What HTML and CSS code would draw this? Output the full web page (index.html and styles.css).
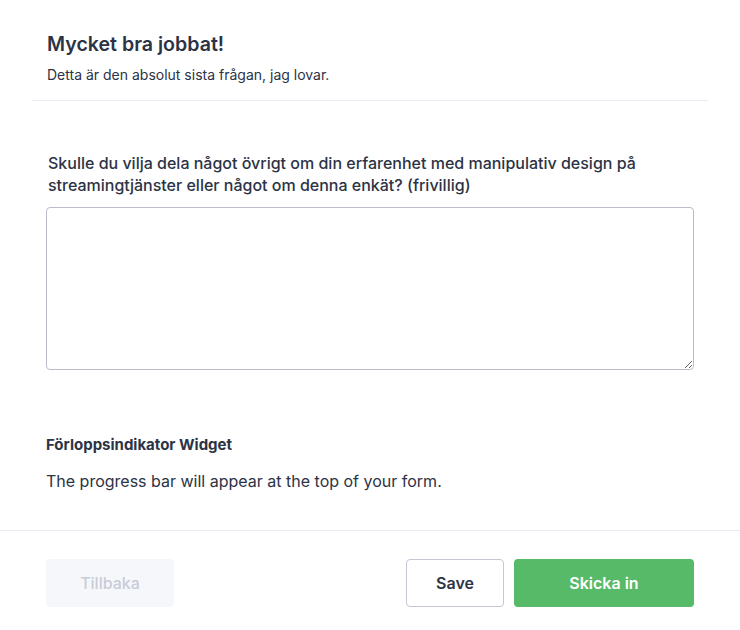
FILE: index.html
```html
<!DOCTYPE html>
<html lang="sv">
<head>
<meta charset="utf-8">
<link rel="stylesheet" href="styles.css">
</head>
<body>
<div class="page">
  <header class="header">
    <h1 class="title">Mycket bra jobbat!</h1>
    <p class="subtitle">Detta är den absolut sista frågan, jag lovar.</p>
  </header>
  <section class="question">
    <label class="q-label">Skulle du vilja dela något övrigt om din erfarenhet med manipulativ design på streamingtjänster eller något om denna enkät? (frivillig)</label>
    <textarea class="q-input"></textarea>
  </section>
  <section class="widget">
    <h2 class="widget-title">Förloppsindikator Widget</h2>
    <p class="widget-text">The progress bar will appear at the top of your form.</p>
  </section>
  <footer class="footer">
    <button class="btn btn-back">Tillbaka</button>
    <div class="right">
      <button class="btn btn-save">Save</button>
      <button class="btn btn-submit">Skicka in</button>
    </div>
  </footer>
</div>
</body>
</html>
```

FILE: styles.css
```css
* { box-sizing: border-box; }
html, body { margin: 0; padding: 0; background: #fff; }
body {
  font-family: Inter, "Noto Sans", sans-serif;
  color: #2c3345;
  width: 740px;
}
.page { display: flex; flex-direction: column; }
.header {
  margin: 0 32px;
  padding: 32px 15px 15px;
  border-bottom: 1px solid #eaebf2;
}
.title {
  margin: 0;
  font-size: 19.6px;
  line-height: 24px;
  font-weight: 600;
}
.subtitle {
  margin: 9px 0 0;
  font-size: 14px;
  line-height: 20px;
}
.question {
  padding: 51px 46px 0 46px;
  display: flex;
  flex-direction: column;
}
.q-label {
  font-size: 16px;
  line-height: 22px;
  font-weight: 500;
  padding: 0 0 0 2px;
  margin-bottom: 11px;
}
.q-input {
  width: 648px;
  height: 163px;
  border: 1px solid #b8bdc9;
  border-radius: 4px;
  resize: vertical;
  font-family: inherit;
}
.widget {
  padding: 65px 46px 38px;
}
.widget-title {
  margin: 0;
  font-size: 15px;
  line-height: 20px;
  font-weight: 700;
}
.widget-text {
  margin: 15px 0 0;
  font-size: 16px;
  line-height: 22px;
  font-weight: 400;
}
.footer {
  border-top: 1px solid #eaebf2;
  padding: 28px 46px 0;
  display: flex;
  justify-content: space-between;
}
.right { display: flex; gap: 10px; }
.btn {
  height: 48px;
  font-family: inherit;
  font-size: 16px;
  font-weight: 600;
  border-radius: 4px;
  cursor: pointer;
}
.btn-back {
  width: 128px;
  background: #f6f7fb;
  border: none;
  color: #c8ccd6;
  font-weight: 500;
}
.btn-save {
  width: 98px;
  background: #fff;
  border: 1px solid #c3c7d6;
  color: #2c3345;
}
.btn-submit {
  width: 180px;
  background: #57ba68;
  border: none;
  color: #fff;
}
```
